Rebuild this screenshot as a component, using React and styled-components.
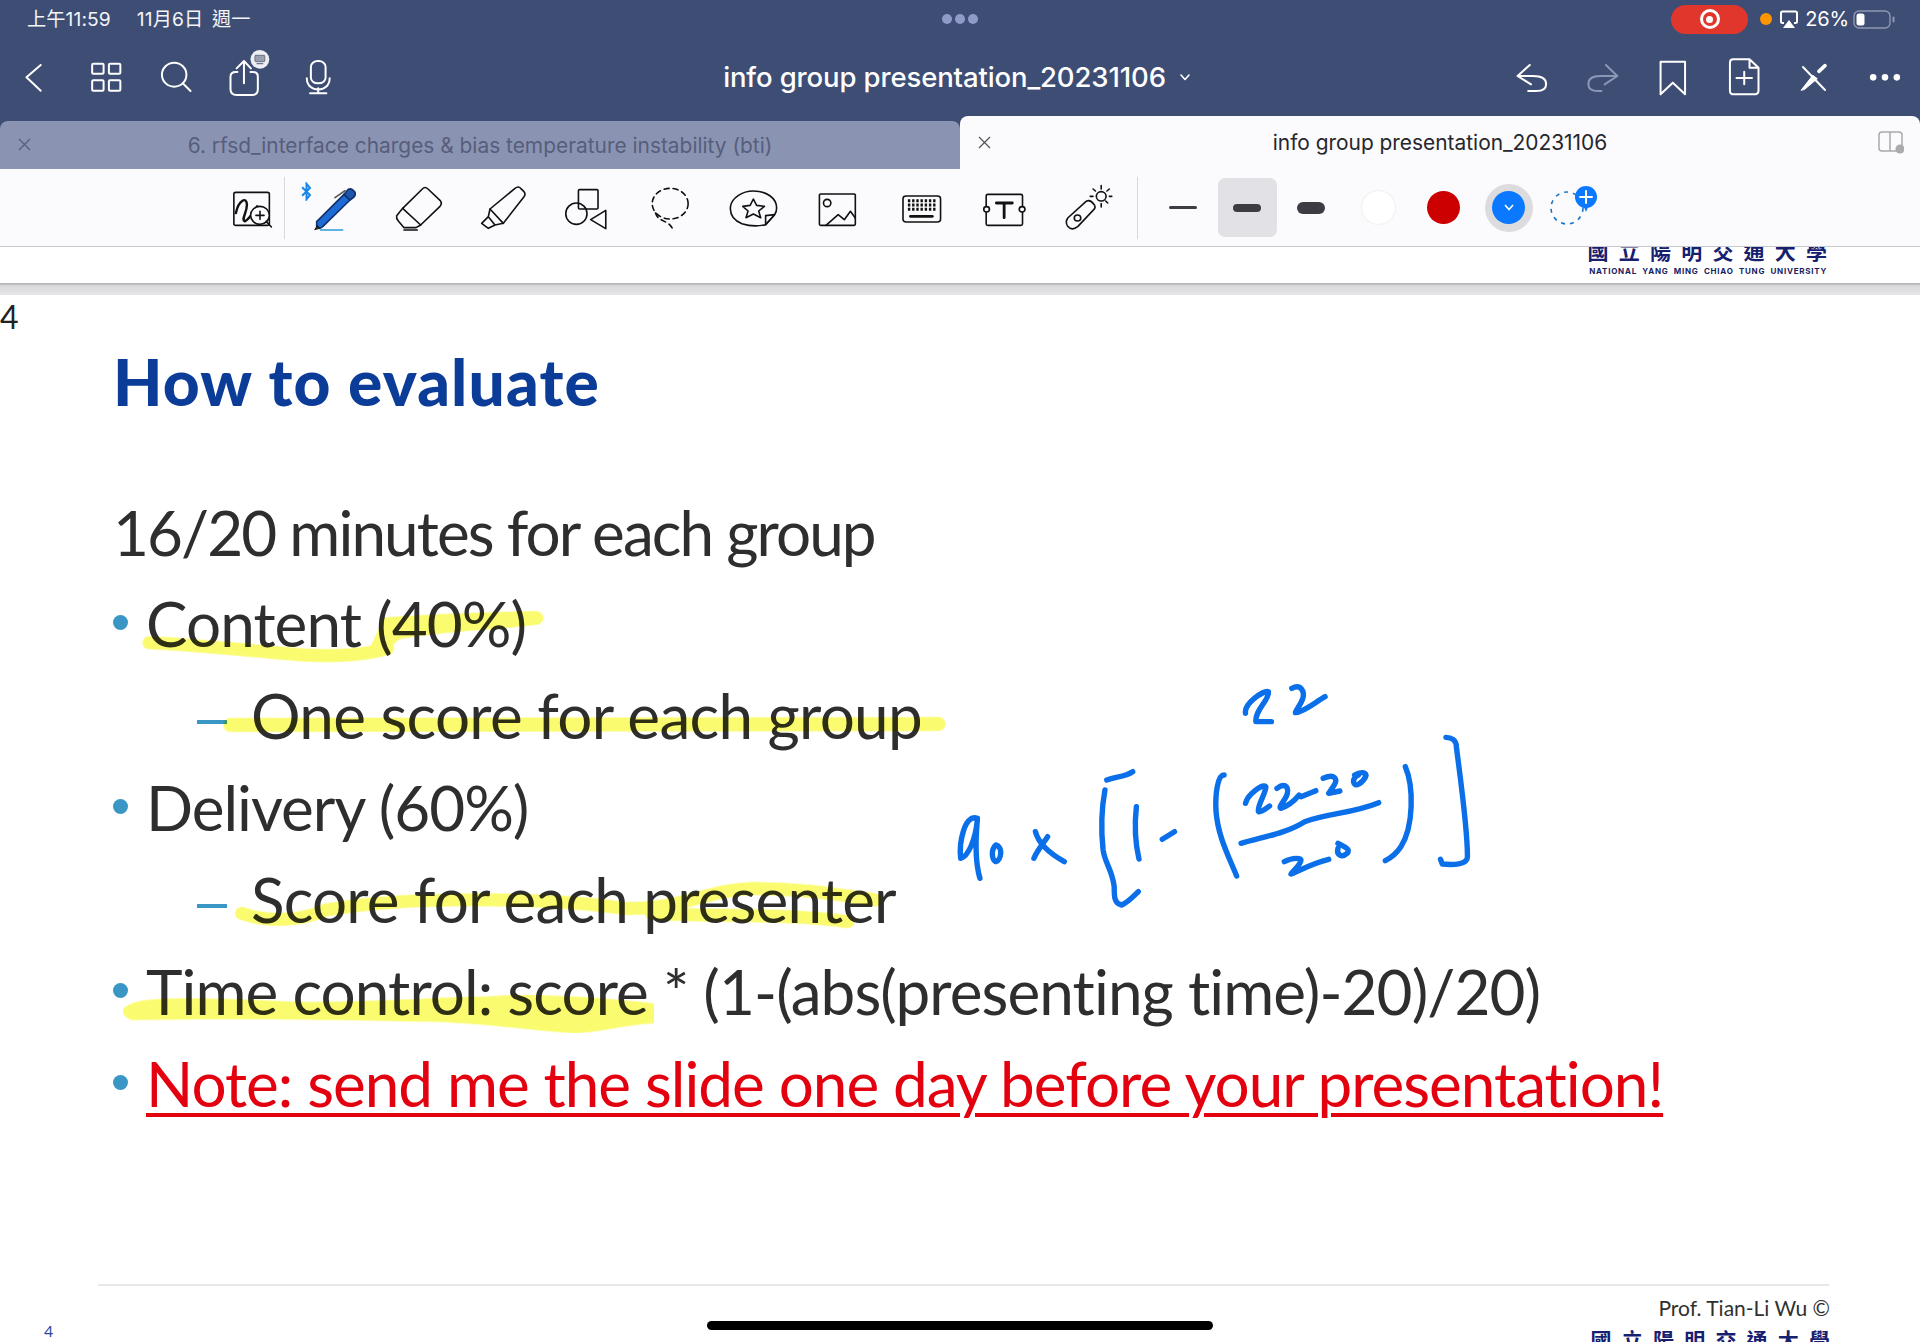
import React from "react";
import styled, { createGlobalStyle } from "styled-components";

const Global = createGlobalStyle`
  html, body { margin: 0; padding: 0; background: #fff; }
  svg * { vector-effect: non-scaling-stroke; }
`;
const UI = `Inter, "Noto Sans CJK TC", sans-serif`;
const SLIDE = `Lato, "Noto Sans", sans-serif`;

const Page = styled.div`
  position: relative; width: 1920px; height: 1342px; overflow: hidden;
  display: flex; flex-direction: column; background: #fff; font-family: ${UI};
`;
const Header = styled.header`
  height: 116px; background: #3e4d74; color: #fff; display: flex; flex-direction: column; flex: none;
`;
const StatusBar = styled.div`
  height: 38px; display: grid; grid-template-columns: 1fr auto 1fr; align-items: center; padding: 0 25px 0 27px;
`;
const Clock = styled.div`
  font-size: 19.2px; white-space: pre; letter-spacing: 0.1px; word-spacing: 3.2px; color: #f4f5f9; padding-bottom: 2px;
`;
const Multi = styled.div`display: flex; gap: 3px; margin-left: -2px;`;
const MultiDot = styled.span`
  width: 10px; height: 10px; border-radius: 50%; background: #8f9bc6;
`;
const StatusRight = styled.div`display: flex; align-items: center; justify-content: flex-end;`;
const RecPill = styled.div`
  width: 77px; height: 29px; border-radius: 15px; background: #e0362c; margin-right: 12px;
  display: flex; align-items: center; justify-content: center;
`;
const RecRing = styled.span`
  width: 20px; height: 20px; border-radius: 50%; border: 3px solid #fff; box-sizing: border-box;
  display: flex; align-items: center; justify-content: center;
  &::after { content: ""; width: 7px; height: 7px; border-radius: 50%; background: #fff; }
`;
const OrangeDot = styled.span`
  width: 12px; height: 12px; border-radius: 50%; background: #ff9500; margin-right: 8px;
`;
const Battery = styled.span`font-size: 20px; margin: 0 4px 0 7px; color: #fff; letter-spacing: -0.2px;`;

const NavBar = styled.div`
  height: 78px; display: grid; grid-template-columns: 1fr auto 1fr; align-items: center; padding: 0 13px 0 11px;
`;
const NavGroup = styled.div`
  display: flex; gap: 27px; align-items: center; justify-content: ${(p) => (p.$end ? "flex-end" : "flex-start")};
`;
const DocTitle = styled.div`
  font-size: 27.5px; font-weight: 500; display: flex; align-items: center; gap: 14px; letter-spacing: -0.12px;
  margin-left: -5px;
`;

const TabStrip = styled.div`
  height: 53px; background: #3e4d74; display: grid; grid-template-columns: 1fr 1fr; align-items: end; flex: none;
`;
const Tab = styled.div`
  position: relative; display: flex; align-items: center; justify-content: center;
  height: ${(p) => (p.$active ? 53 : 48)}px;
  background: ${(p) => (p.$active ? "#fbfafc" : "#8a94b2")};
  color: ${(p) => (p.$active ? "#26262c" : "#565e7c")};
  border-radius: 8px 8px 0 0; font-size: 20.9px; white-space: nowrap;
`;
const TabClose = styled.svg`position: absolute; left: ${(p) => p.$x}px; top: 50%; margin-top: -7px;`;
const SplitIcon = styled.svg`position: absolute; right: 16px; top: 14px;`;

const ToolRow = styled.div`
  height: 77px; background: #fbfafc; border-bottom: 1px solid #c9c9cc; display: flex; align-items: center;
  padding-left: 209px; flex: none;
`;
const ToolSlot = styled.div`
  position: relative; width: ${(p) => p.$w || 84}px; height: 60px; flex: none;
  display: flex; align-items: center; justify-content: center;
`;
const Divider = styled.span`
  width: 1px; height: 62px; background: #d8d8dc; flex: none;
  margin: 0 ${(p) => p.$r || 0}px 0 ${(p) => p.$l || 0}px;
`;
const FirstDivider = styled(Divider)`position: absolute; right: 8px; top: -1px;`;
const BlueTooth = styled.svg`position: absolute; left: 8px; top: 4px;`;
const LineSample = styled.span`
  display: block; width: 28px; height: ${(p) => p.$h}px; border-radius: ${(p) => p.$h}px; background: #3c3c42;
`;
const LineBox = styled.div`
  width: 59px; height: 59px; border-radius: 7px; display: flex; align-items: center; justify-content: center;
  background: ${(p) => (p.$on ? "#e2e2e6" : "transparent")};
`;
const ColorDot = styled.span`
  width: 33px; height: 33px; border-radius: 50%; background: ${(p) => p.$c};
  box-shadow: ${(p) => (p.$edge ? "0 0 2px #dcdcdc" : "none")};
`;
const ColorRing = styled.span`
  width: 48px; height: 48px; border-radius: 50%; background: #dcdcdf;
  display: flex; align-items: center; justify-content: center;
`;
const ColorInner = styled.span`
  width: 33px; height: 33px; border-radius: 50%; background: #0a78ff;
  display: flex; align-items: center; justify-content: center;
`;

const Peek = styled.div`
  height: 36px; background: #fff; flex: none; overflow: hidden; display: flex; flex-direction: column;
  align-items: flex-end; padding-right: 93px; position: relative;
`;
const Uni = styled.div`
  font: 700 21px/21px "Noto Sans CJK TC", sans-serif; letter-spacing: 10.2px; margin-right: -10.2px; color: #16206e; white-space: nowrap;
  margin-top: ${(p) => p.$mt}px;
`;
const UniEn = styled.div`
  font: 700 8px/10px ${UI}; letter-spacing: 0.75px; color: #17225f; margin-top: 5px; white-space: pre;
`;
const ShadowBand = styled.div`
  height: 12px; flex: none; background: linear-gradient(#aeaeb0 0, #dadadc 3px, #e6e6e8 100%);
`;
const Slide = styled.main`
  flex: 1; display: flex; flex-direction: column; min-height: 0; font-family: ${SLIDE}; color: #2e2e2e;
`;
const PageNum = styled.div`
  height: 51px; font-size: 32px; line-height: 44px; letter-spacing: -1px; color: #222;
`;
const Title = styled.h1`
  margin: 0 0 67.5px 113px; font: 900 64px/72px ${SLIDE}; color: #0b3d98; letter-spacing: 1.2px;
`;
const Row = styled.div`
  height: 91.9px; line-height: 92px; font-size: 62px; white-space: nowrap; display: flex; align-items: flex-start;
  padding-left: ${(p) => (p.$sub ? 197 : 113)}px;
  letter-spacing: ${(p) => p.$ls || 0}px; position: relative; font-variant-ligatures: none;
`;
const Bullet = styled.span`
  width: 15px; height: 15px; border-radius: 50%; background: #3a96c4; flex: none; margin: 38px 18px 0 0;
`;
const Dash = styled.span`
  width: 30px; height: 4px; background: #3a96c4; flex: none; margin: 51px 24px 0 0;
`;
const Red = styled.span`
  color: #e3000f; text-decoration: underline; text-decoration-thickness: 4px; text-underline-offset: 6px;
`;
const FootRule = styled.div`
  height: 2px; background: #e9e7eb; margin: auto 91px 0 98px; flex: none;
`;
const Foot = styled.footer`
  height: 56px; display: flex; justify-content: space-between; padding: 9px 90px 0 44px; overflow: hidden; flex: none; box-sizing: border-box;
`;
const FootNum = styled.div`
  font-size: 16px; color: #2a4a9a; margin-top: 26px; line-height: 20px;
`;
const FootRight = styled.div`display: flex; flex-direction: column; align-items: flex-end;`;
const Prof = styled.div`font-size: 21px; line-height: 26px; color: #303030;`;

const Overlay = styled.svg`position: absolute; left: 0; top: 0; pointer-events: none;`;
const Ink = styled.g`mix-blend-mode: multiply;`;
const HomeBar = styled.div`
  position: absolute; left: 707px; top: 1321px; width: 506px; height: 9px; border-radius: 5px; background: #000;
`;
const GlyphSvg = styled.svg`display: block; flex: none; overflow: visible;`;

const Glyph = ({ cx, cy = 625, size = 60, sw = 1.6, color = "#111", children }) => (
  <GlyphSvg width={size} height={size} viewBox={`${cx - size * 1.225} ${cy - size * 1.5} ${size * 2.45} ${size * 3}`}
    preserveAspectRatio="none" fill="none" stroke={color} strokeWidth={sw} strokeLinecap="round" strokeLinejoin="round">
    {children}
  </GlyphSvg>
);
const Nav = ({ cx, sw = 2, color = "#fff", children }) => (
  <Glyph cx={cx} cy={231} size={44} sw={sw} color={color}>{children}</Glyph>
);
const Marker = ({ x, children }) => (
  <GlyphSvg width="84" height="60" viewBox={`${x} 9 252 180`} fill="none" stroke="#111" strokeWidth="1.6" strokeLinecap="round" strokeLinejoin="round">
    {children}
  </GlyphSvg>
);

export default function App() {
  return (
    <Page>
      <Global />
      <Header>
        <StatusBar>
          <Clock>上午11:59   11月6日 週一</Clock>
          <Multi><MultiDot /><MultiDot /><MultiDot /></Multi>
          <StatusRight>
            <RecPill><RecRing /></RecPill>
            <OrangeDot />
            <svg width="18" height="19" viewBox="0 0 18 19" fill="none" stroke="#fff" strokeWidth="2">
              <path d="M4 13H2.5Q1 13 1 11.5V3Q1 1.5 2.5 1.5H15.5Q17 1.5 17 3V11.5Q17 13 15.5 13H14" />
              <path d="M9 10L15 18H3Z" fill="#fff" stroke="none" />
            </svg>
            <Battery>26%</Battery>
            <svg width="42" height="19" viewBox="0 0 42 19">
              <rect x="1" y="1" width="36" height="17" rx="5" fill="none" stroke="#8e97b3" strokeWidth="1.4" />
              <rect x="3.5" y="3.5" width="8" height="12" rx="2.5" fill="#fff" />
              <rect x="39.5" y="6.5" width="2" height="6" rx="1" fill="#8e97b3" />
            </svg>
          </StatusRight>
        </StatusBar>
        <NavBar>
          <NavGroup>
            <Nav cx={81}><path d="M100 195L65 232L100 272" /></Nav>
            <Nav cx={255} sw={2}>
              <rect x="226" y="191" width="28" height="30" rx="3" /><rect x="267" y="191" width="28" height="30" rx="3" />
              <rect x="226" y="241" width="28" height="31" rx="3" /><rect x="267" y="241" width="28" height="31" rx="3" />
            </Nav>
            <Nav cx={429}>
              <ellipse cx="427" cy="224" rx="30" ry="36" /><path d="M448 250L467 273" />
            </Nav>
            <Nav cx={603}>
              <path d="M582 216H578Q565 216 565 230V268Q565 285 580 285H618Q632 285 632 268V230Q632 216 620 216H614" />
              <path d="M598 250V185M580 205L598 183L615 205" />
              <ellipse cx="637" cy="178" rx="23" ry="28" fill="#eceef3" stroke="none" />
              <rect x="625" y="166" width="24" height="19" rx="2" fill="#9aa0b0" stroke="#6a7288" strokeWidth="1" />
              <path d="M630 191H644" stroke="#6a7288" strokeWidth="1.2" />
            </Nav>
            <Nav cx={777}>
              <rect x="762" y="183" width="36" height="67" rx="17" /><path d="M752 235C752 280 808 280 808 235M780 265V280M760 280H800" />
            </Nav>
          </NavGroup>
          <DocTitle>
            info group presentation_20231106
            <svg width="10" height="7" viewBox="0 0 10 7" fill="none" stroke="#fff" strokeWidth="1.6" strokeLinecap="round" strokeLinejoin="round"><path d="M1 1L5 5.5L9 1" /></svg>
          </DocTitle>
          <NavGroup $end>
            <Nav cx={612.5}>
              <path d="M612 195L582 228L615 253M582 228H620Q652 228 652 252Q652 273 628 273H608" />
            </Nav>
            <Nav cx={786} color="#8c97b5">
              <path d="M798 195L826 228L795 253M826 228H785Q755 228 755 252Q755 273 778 273H787" />
            </Nav>
            <Nav cx={960}><path d="M932 185H992V283L962 248L932 283Z" /></Nav>
            <Nav cx={1134}>
              <path d="M1110 178H1150L1172 203V272Q1172 283 1160 283H1112Q1102 283 1102 272V188Q1102 178 1110 178ZM1150 178V203H1172M1137 215V253M1118 234H1156" />
            </Nav>
            <Nav cx={1308}>
              <path d="M1281 201L1335 270" />
              <path d="M1277 270L1305 226L1316 236L1285 268Z" fill="#fff" strokeWidth="1" />
              <path d="M1320 214L1335 197" strokeWidth="3.6" />
            </Nav>
            <Nav cx={1482}>
              <ellipse cx="1453" cy="232" rx="8" ry="10" fill="#fff" stroke="none" />
              <ellipse cx="1482" cy="232" rx="8" ry="10" fill="#fff" stroke="none" />
              <ellipse cx="1511" cy="232" rx="8" ry="10" fill="#fff" stroke="none" />
            </Nav>
          </NavGroup>
        </NavBar>
      </Header>

      <TabStrip>
        <Tab>
          <TabClose $x={18} width="13" height="13" viewBox="0 0 13 13" stroke="#565e7c" strokeWidth="1.3"><path d="M1 1L12 12M12 1L1 12" /></TabClose>
          6. rfsd_interface charges &amp; bias temperature instability (bti)
        </Tab>
        <Tab $active>
          <TabClose $x={18} width="13" height="13" viewBox="0 0 13 13" stroke="#55555c" strokeWidth="1.3"><path d="M1 1L12 12M12 1L1 12" /></TabClose>
          info group presentation_20231106
          <SplitIcon width="26" height="24" viewBox="0 0 26 24" fill="none" stroke="#a9a9ae" strokeWidth="1.5">
            <rect x="1" y="2" width="23" height="19" rx="3" /><path d="M12 2V21" />
            <circle cx="22" cy="19" r="4.5" fill="#a9a9ae" stroke="none" />
          </SplitIcon>
        </Tab>
      </TabStrip>

      <ToolRow>
        <ToolSlot>
          <Glyph cx={615}>
            <rect x="573" y="578" width="87" height="99" rx="5" />
            <path d="M578 640C585 600 605 590 605 615C605 640 590 660 600 665C610 660 620 640 630 620" strokeWidth="2.4" />
            <ellipse cx="637" cy="647" rx="23" ry="27" fill="#fbfafc" />
            <path d="M652 665L665 682M627 647H647M637 635V659" />
          </Glyph>
          <FirstDivider />
        </ToolSlot>
        <ToolSlot>
          <BlueTooth width="11" height="19" viewBox="0 0 12 22" fill="none" stroke="#1787ea" strokeWidth="2"><path d="M1 6L10 15L6 20V2L10 7L1 16" /></BlueTooth>
          <Marker x={-21}>
            <path d="M50 140L132 58L150 75L68 155Q55 165 50 155Z" fill="#1f6bd6" stroke="#12306a" />
            <path d="M132 58L145 43Q155 38 165 52Q168 62 160 68L150 75Z" fill="#1d57ac" stroke="#12306a" />
            <path d="M105 68L135 47" stroke="#555" />
            <path d="M52 152L44 164L58 160Z" fill="#222" stroke="#222" strokeWidth="1" />
            <path d="M62 165H128" stroke="#2b9cd8" />
          </Marker>
        </ToolSlot>
        <ToolSlot>
          <Marker x={231}>
            <path d="M367 42Q375 33 384 42L420 76Q428 85 420 94L362 150L348 158H312L295 138Q288 130 290 122L308 100Z" />
            <path d="M308 100L362 150M312 165H352" />
          </Marker>
        </ToolSlot>
        <ToolSlot>
          <Marker x={483}>
            <path d="M645 40Q655 32 662 40L672 50Q678 58 672 65L610 145L570 102Z" />
            <path d="M570 102L565 125L585 150L610 145M565 125L545 145L565 160L585 150" />
          </Marker>
        </ToolSlot>
        <ToolSlot>
          <Glyph cx={1438}>
            <rect x="1417" y="570" width="48" height="58" rx="3" />
            <ellipse cx="1412" cy="642" rx="26" ry="32" />
            <path d="M1484 632V687L1447 660Z" />
          </Glyph>
        </ToolSlot>
        <ToolSlot>
          <Glyph cx={76}>
            <ellipse cx="74" cy="612" rx="44" ry="46" strokeDasharray="5 4" />
            <path d="M38 640C45 668 70 660 80 688" strokeDasharray="5 4" />
          </Glyph>
        </ToolSlot>
        <ToolSlot>
          <Glyph cx={282}>
            <path d="M308 675C290 680 265 678 250 672C225 660 220 640 222 620C225 595 250 574 278 574C310 574 335 595 335 625C335 635 332 642 330 645Z" />
            <path d="M330 645L308 648L308 675Z" />
            <path d="M278 598L286 617L305 620L291 634L296 654L278 643L260 654L265 634L252 620L270 617Z" />
          </Glyph>
        </ToolSlot>
        <ToolSlot>
          <Glyph cx={487}>
            <rect x="439" y="583" width="88" height="94" rx="3" />
            <ellipse cx="458" cy="610" rx="9" ry="11" />
            <path d="M455 677L485 645L500 660L515 635L527 655" />
          </Glyph>
        </ToolSlot>
        <ToolSlot>
          <Glyph cx={693}>
            <rect x="644" y="589" width="92" height="78" rx="8" />
            <path d="M656 603H726M656 616H726M656 629H726" strokeWidth="3" strokeDasharray="2.4 1.8" strokeLinecap="butt" />
            <path d="M662 650H716" strokeWidth="2.6" />
          </Glyph>
        </ToolSlot>
        <ToolSlot>
          <Glyph cx={899}>
            <rect x="848" y="584" width="89" height="93" rx="4" />
            <ellipse cx="849" cy="629" rx="7" ry="8" fill="#fbfafc" />
            <ellipse cx="936" cy="629" rx="7" ry="8" fill="#fbfafc" />
            <path d="M873 610H912M892 610V654" strokeWidth="2.8" />
          </Glyph>
        </ToolSlot>
        <ToolSlot>
          <Glyph cx={1107}>
            <path d="M1050 655L1095 605Q1105 598 1115 615Q1120 625 1112 632L1075 680Q1060 695 1050 680Q1043 668 1050 655Z" />
            <ellipse cx="1074" cy="655" rx="8" ry="9" />
            <ellipse cx="1132" cy="590" rx="12" ry="14" />
            <path d="M1132 558V568M1132 612V622M1105 590H1112M1152 590H1158M1112 568L1118 574M1152 568L1146 574M1148 610L1143 604" />
          </Glyph>
        </ToolSlot>
        <Divider $l={4} $r={13} />
        <ToolSlot $w={64}><LineSample $h={3} /></ToolSlot>
        <ToolSlot $w={64}><LineBox $on><LineSample $h={8} /></LineBox></ToolSlot>
        <ToolSlot $w={64}><LineSample $h={12} /></ToolSlot>
        <ToolSlot $w={3} />
        <ToolSlot $w={65}><ColorDot $c="#fff" $edge /></ToolSlot>
        <ToolSlot $w={65}><ColorDot $c="#cc0000" /></ToolSlot>
        <ToolSlot $w={65}>
          <ColorRing>
            <ColorInner>
              <svg width="10" height="7" viewBox="0 0 10 7" fill="none" stroke="#fff" strokeWidth="1.6"><path d="M1 1L5 5.5L9 1" /></svg>
            </ColorInner>
          </ColorRing>
        </ToolSlot>
        <ToolSlot $w={65}>
          <svg width="60" height="60" viewBox="0 0 60 60" fill="none">
            <circle cx="23" cy="30" r="16" stroke="#1c74c8" strokeWidth="1.6" strokeDasharray="4 5" />
            <circle cx="42" cy="19" r="11" fill="#0a78ff" />
            <path d="M42 13V25M36 19H48" stroke="#fff" strokeWidth="2" strokeLinecap="round" />
            <path d="M40 29L42 34L44 29Z" fill="#0a78ff" />
          </svg>
        </ToolSlot>
      </ToolRow>

      <Peek>
        <Uni $mt={-7}>國立陽明交通大學</Uni>
        <UniEn>NATIONAL  YANG  MING  CHIAO  TUNG  UNIVERSITY</UniEn>
      </Peek>
      <ShadowBand />

      <Slide>
        <PageNum>4</PageNum>
        <Title>How to evaluate</Title>
        <Row $ls={-1.9}>16/20 minutes for each group</Row>
        <Row $ls={-0.9}><Bullet />Content (40%)</Row>
        <Row $sub $ls={-0.7}><Dash />One score for each group</Row>
        <Row $ls={-1}><Bullet />Delivery (60%)</Row>
        <Row $sub $ls={-0.8}><Dash />Score for each presenter</Row>
        <Row $ls={-0.9}><Bullet />Time control: score * (1-(abs(presenting time)-20)/20)</Row>
        <Row $ls={-1}><Bullet /><Red>Note: send me the slide one day before your presentation!</Red></Row>
        <FootRule />
        <Foot>
          <FootNum>4</FootNum>
          <FootRight>
            <Prof>Prof. Tian-Li Wu ©</Prof>
            <Uni $mt={8}>國立陽明交通大學</Uni>
          </FootRight>
        </Foot>
      </Slide>

      <Overlay width="1920" height="1342" viewBox="0 0 1920 1342" fill="none">
        <Ink>
          <svg x="90" y="580" width="880" height="360" viewBox="0 0 1568 1080" preserveAspectRatio="none" strokeLinecap="round" strokeLinejoin="round" fill="none" stroke="#fbfb70">
            <path d="M105 188C200 195 300 215 380 225C440 232 500 222 530 205" strokeWidth="13" />
            <path d="M525 115C600 105 700 100 795 95Q815 110 800 130C740 145 620 150 550 175L530 205L500 205Z" fill="#fbfb70" strokeWidth="2" />
            <path d="M250 435L1512 432" strokeWidth="14" />
            <path d="M270 1000C320 1030 380 1020 420 990C550 950 800 950 950 985C1050 990 1100 930 1180 925C1280 925 1350 950 1400 960" strokeWidth="13" />
            <path d="M1000 1000C1100 1010 1250 1000 1350 1025" strokeWidth="13" />
          </svg>
          <svg x="90" y="940" width="880" height="200" viewBox="0 0 1568 600" preserveAspectRatio="none">
            <path d="M60 205C80 175 120 170 300 180C450 195 560 175 700 170C800 160 900 170 1005 190L1005 250C950 255 900 280 860 280C780 270 700 250 600 245C450 240 250 235 75 240Q55 230 60 205Z" fill="#fbfb70" />
          </svg>
        </Ink>
        <svg x="920" y="660" width="580" height="270" viewBox="0 0 1568 810" preserveAspectRatio="none" stroke="#0a6fe8" strokeWidth="5.4" strokeLinecap="round" strokeLinejoin="round" fill="none">
          <path d="M880 160C875 130 930 90 942 95C945 120 905 150 908 185L950 185" />
          <path d="M1005 85C1030 70 1040 95 1035 115C1030 135 1015 150 1015 158C1040 155 1070 125 1095 110" />
          <path d="M155 475C120 460 105 550 110 595C130 590 150 540 155 480C150 540 150 610 162 655" />
          <path d="M205 555C190 570 195 600 205 605C220 600 225 560 205 555Z" />
          <path d="M312 515C320 550 350 580 390 605M345 530C330 555 315 575 308 595" />
          <path d="M505 360C530 350 555 350 575 335" />
          <path d="M500 390C490 450 490 520 495 570C500 610 520 630 525 680C525 710 525 730 545 735C565 725 580 705 590 695" />
          <path d="M585 440C580 490 582 550 592 597" />
          <path d="M655 538L688 515" />
          <path d="M822 345C805 345 798 400 800 450C805 530 835 590 856 648" />
          <path d="M880 430C885 405 925 370 935 380C935 400 910 440 915 455C925 458 935 445 945 438" />
          <path d="M965 385C990 365 1000 385 990 410C980 430 970 440 975 445C990 440 1010 425 1025 405" />
          <path d="M1030 410L1070 392" />
          <path d="M1090 355C1120 340 1130 355 1120 375L1105 400L1135 393" />
          <path d="M1175 345C1190 335 1210 335 1205 350C1195 370 1175 385 1172 365C1172 355 1175 350 1185 345" />
          <path d="M868 550C930 530 990 520 1040 485C1100 460 1170 460 1240 428" />
          <path d="M985 605C1010 590 1030 595 1030 600C1030 615 1005 635 1003 642C1030 630 1060 610 1105 598" />
          <path d="M1130 550C1145 560 1165 565 1155 580C1140 595 1125 585 1130 565" />
          <path d="M1312 320C1335 380 1335 500 1300 560C1285 585 1270 595 1258 602" />
          <path d="M1422 232C1435 232 1450 240 1450 260C1460 350 1480 500 1480 590C1480 615 1440 615 1412 612L1407 598" />
        </svg>
      </Overlay>
      <HomeBar />
    </Page>
  );
}
